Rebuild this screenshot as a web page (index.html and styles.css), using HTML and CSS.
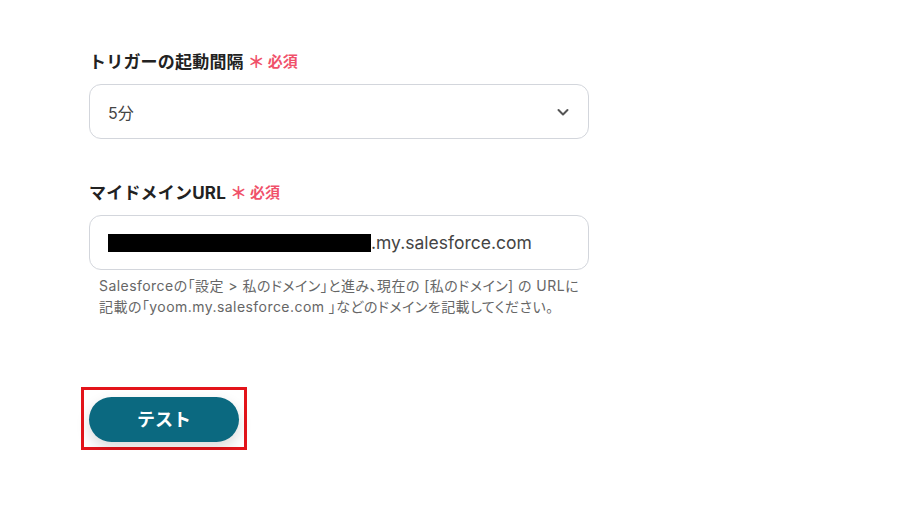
FILE: index.html
```html
<!DOCTYPE html>
<html lang="ja">
<head>
    <meta charset="UTF-8">
    <meta name="viewport" content="width=device-width, initial-scale=1.0">
    <title>トリガー設定</title>
    <link rel="stylesheet" href="styles.css">
</head>
<body>
    <div class="form">
        <div class="field">
            <label class="label">トリガーの起動間隔<span class="required"><span class="star">＊</span>必須</span></label>
            <div class="select">
                <span>5分</span>
                <svg class="chevron" width="14" height="14" viewBox="0 0 14 14">
                    <path d="M2.5 5 L7 9.5 L11.5 5" fill="none" stroke="#555" stroke-width="2" stroke-linecap="round" stroke-linejoin="round"/>
                </svg>
            </div>
        </div>

        <div class="field">
            <label class="label">マイドメインURL<span class="required"><span class="star">＊</span>必須</span></label>
            <div class="input">
                <span class="redacted"></span><span>.my.salesforce.com</span>
            </div>
            <p class="help">Salesforceの「設定 &gt; 私のドメイン」と進み、現在の [私のドメイン] の URLに<br>記載の「yoom.my.salesforce.com 」などのドメインを記載してください。</p>
        </div>

        <div class="actions">
            <div class="highlight">
                <button class="test-button">テスト</button>
            </div>
        </div>
    </div>
</body>
</html>
```

FILE: styles.css
```css
* {
    margin: 0;
    padding: 0;
    box-sizing: border-box;
}

body {
    background: #fff;
    font-family: Inter, "Noto Sans CJK JP", sans-serif;
    color: #333;
}

.form {
    width: 500px;
    margin-left: 89px;
    padding-top: 48px;
}

.field {
    margin-bottom: 40px;
}

.field + .field {
    margin-bottom: 0;
}

.label {
    display: flex;
    align-items: center;
    font-size: 17px;
    font-weight: 700;
    color: #222;
    height: 24px;
    margin-bottom: 12px;
    letter-spacing: 0.2px;
}

.required {
    display: flex;
    align-items: center;
    color: #f0516a;
    font-size: 15px;
    margin-left: 4px;
    letter-spacing: 0;
}

.star {
    font-size: 17px;
    margin-right: 3px;
}

.select,
.input {
    height: 55px;
    border: 1px solid #d3d6dc;
    border-radius: 12px;
    display: flex;
    align-items: center;
    padding: 0 18px;
    font-size: 16px;
    color: #444;
}

.select {
    justify-content: space-between;
}

.input {
    font-size: 17.5px;
}

.redacted {
    display: inline-block;
    width: 263px;
    height: 18px;
    background: #000;
}

.help {
    font-size: 14px;
    line-height: 21px;
    color: #666;
    padding: 5px 10px 0;
    letter-spacing: 0.45px;
    font-feature-settings: "palt";
}

.actions {
    margin-top: 70px;
    margin-left: -8px;
}

.highlight {
    display: inline-block;
    border: 3px solid #e3141a;
    padding: 7px 5px 5px 5px;
}

.test-button {
    width: 150px;
    height: 45px;
    border: none;
    border-radius: 23px;
    background: #0b6980;
    color: #fff;
    font-family: Inter, "Noto Sans CJK JP", sans-serif;
    font-size: 18px;
    font-weight: 700;
    padding-bottom: 4px;
    box-shadow: 0 6px 14px rgba(0, 0, 0, 0.15);
}
```
